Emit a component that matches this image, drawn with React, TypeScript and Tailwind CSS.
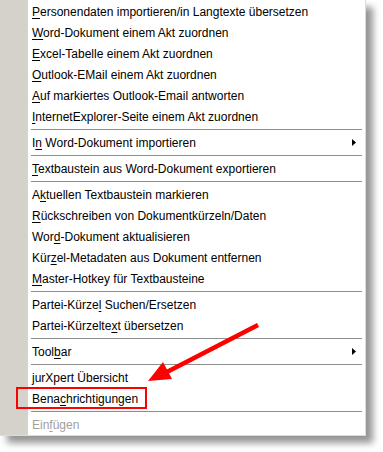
import React from 'react';

type Entry = { label?: string; sub?: boolean; disabled?: boolean; sep?: boolean };

// '&' marks the access key, as in a Windows menu resource
const entries: Entry[] = [
  { label: '&Personendaten importieren/in Langtexte übersetzen' },
  { label: '&Word-Dokument einem Akt zuordnen' },
  { label: '&Excel-Tabelle einem Akt zuordnen' },
  { label: '&Outlook-EMail einem Akt zuordnen' },
  { label: '&Auf markiertes Outlook-Email antworten' },
  { label: '&InternetExplorer-Seite einem Akt zuordnen' },
  { sep: true },
  { label: 'I&n Word-Dokument importieren', sub: true },
  { sep: true },
  { label: '&Textbaustein aus Word-Dokument exportieren' },
  { sep: true },
  { label: 'A&ktuellen Textbaustein markieren' },
  { label: '&Rückschreiben von Dokumentkürzeln/Daten' },
  { label: 'Wor&d-Dokument aktualisieren' },
  { label: 'Kür&zel-Metadaten aus Dokument entfernen' },
  { label: '&Master-Hotkey für Textbausteine' },
  { sep: true },
  { label: 'Partei-Kürze&l Suchen/Ersetzen' },
  { label: 'Partei-Kürzelte&xt übersetzen' },
  { sep: true },
  { label: 'Tool&bar', sub: true },
  { sep: true },
  { label: 'jurXpert Übersicht' },
  { label: 'Bena&chrichtigungen' },
  { sep: true },
  { label: 'Ein&fügen', disabled: true },
];

function Label({ text }: { text: string }) {
  const i = text.indexOf('&');
  if (i < 0) return <span>{text}</span>;
  return (
    <span>
      {text.slice(0, i)}
      <u className="underline-offset-[2px]">{text[i + 1]}</u>
      {text.slice(i + 2)}
    </span>
  );
}

export default function App() {
  return (
    <div className="relative w-[383px] h-[452px] bg-white overflow-hidden" style={{ fontFamily: '"Liberation Sans", Arial, sans-serif' }}>
      {/* Context menu */}
      <div className="flex w-[366px] bg-white border-r border-b border-[#dcdcdc] shadow-[7px_7px_7px_rgba(0,0,0,0.42)]">
        <div className="w-[28px] shrink-0 bg-[#d5d2cc]" />
        <div className="flex-1 pt-[1px] text-[12px] text-black">
          {entries.map((e, i) =>
            e.sep ? (
              <div key={i} className="h-[5px] flex items-center pl-[3px] pr-[3px]">
                <div className="w-full h-px bg-[#8e8e8e]" />
              </div>
            ) : (
              <div key={i} className={`h-[21px] flex items-center pl-[4px] pr-[9px] ${e.disabled ? 'text-[#a0a0a0]' : ''}`}>
                <div className="flex-1 leading-none">
                  <Label text={e.label!} />
                </div>
                {e.sub && (
                  <svg width="4" height="7" viewBox="0 0 4 7">
                    <polygon points="0,0 4,3.5 0,7" fill="#000" />
                  </svg>
                )}
              </div>
            )
          )}
        </div>
      </div>

      {/* Annotation: red frame */}
      <div className="absolute left-[16px] top-[387px] w-[131px] h-[22px] border-2 border-[#ff0000]" />

      {/* Annotation: red arrow */}
      <svg className="absolute inset-0 pointer-events-none" width="383" height="452">
        <line x1="258" y1="325" x2="165" y2="373" stroke="#ff0000" strokeWidth="4.5" />
        <polygon points="148,381 163,362 172,379" fill="#ff0000" />
      </svg>
    </div>
  );
}
